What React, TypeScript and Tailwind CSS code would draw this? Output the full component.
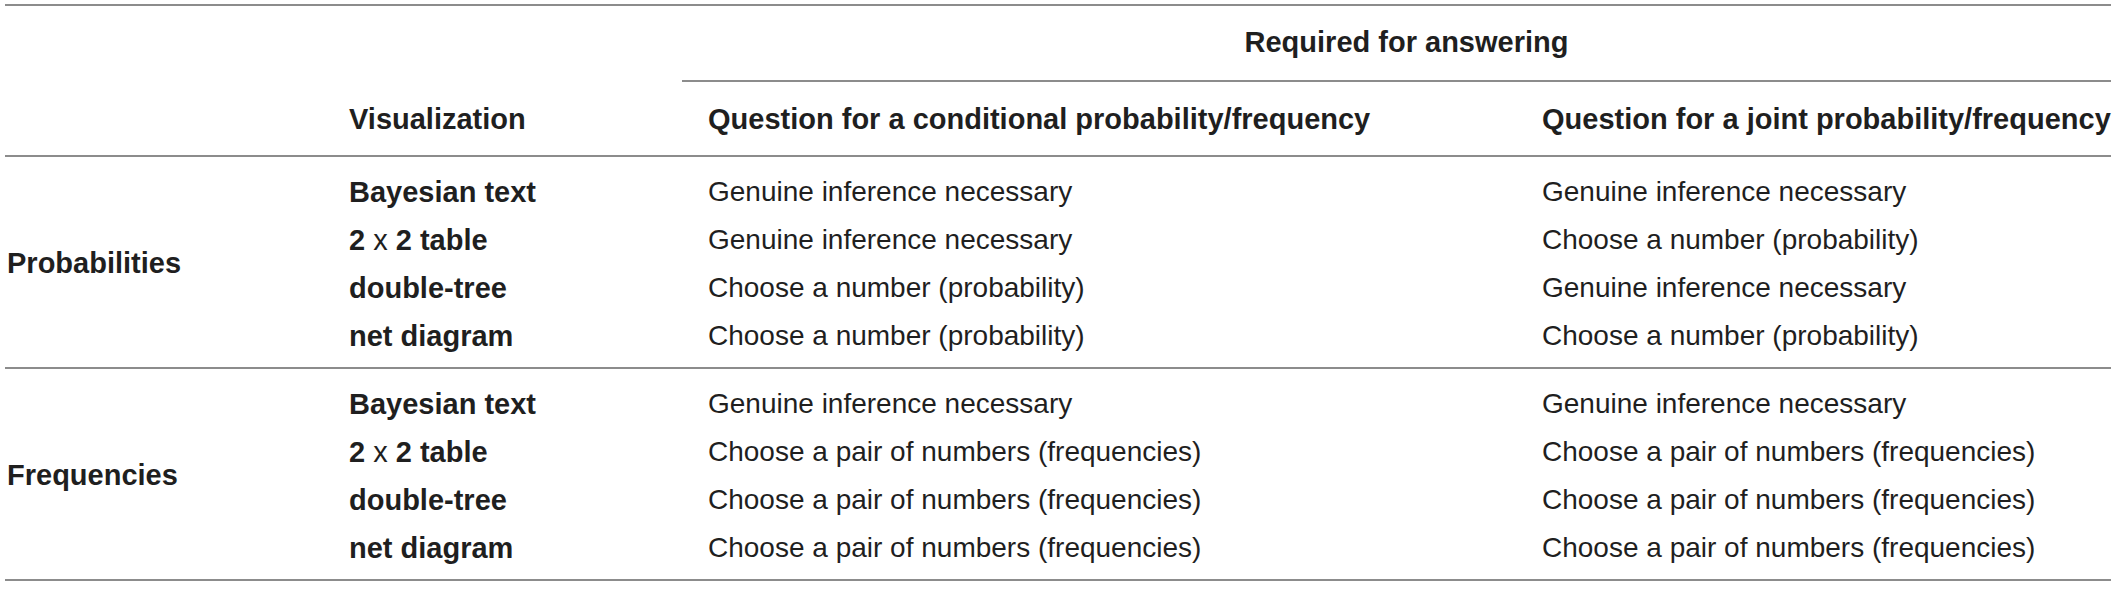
const groups = [
  {
    label: "Probabilities",
    rows: [
      ["Bayesian text", "Genuine inference necessary", "Genuine inference necessary"],
      ["2x2", "Genuine inference necessary", "Choose a number (probability)"],
      ["double-tree", "Choose a number (probability)", "Genuine inference necessary"],
      ["net diagram", "Choose a number (probability)", "Choose a number (probability)"],
    ],
  },
  {
    label: "Frequencies",
    rows: [
      ["Bayesian text", "Genuine inference necessary", "Genuine inference necessary"],
      ["2x2", "Choose a pair of numbers (frequencies)", "Choose a pair of numbers (frequencies)"],
      ["double-tree", "Choose a pair of numbers (frequencies)", "Choose a pair of numbers (frequencies)"],
      ["net diagram", "Choose a pair of numbers (frequencies)", "Choose a pair of numbers (frequencies)"],
    ],
  },
];

function VisLabel({ name }: { name: string }) {
  if (name === "2x2") {
    return (
      <>
        2 <span className="font-normal">x</span> 2 table
      </>
    );
  }
  return <>{name}</>;
}

export default function App() {
  return (
    <div className="bg-white w-[2117px] h-[591px] pt-[4px] pl-[5px] pr-[6px] font-['Liberation_Sans',Arial,sans-serif] text-[28px] text-[#1f1f1f]">
      <div className="border-t-2 border-[#8c8c8c]">
        <div className="grid grid-cols-[318px_359px_834px_1fr]">
          <div />
          <div />
          <div className="col-span-2 h-[76px] flex items-center justify-center pl-[20px] font-bold text-[29px] border-b-2 border-[#8c8c8c]">
            Required for answering
          </div>
        </div>

        <div className="grid grid-cols-[318px_359px_834px_1fr] h-[75px] items-center pt-[2px] font-bold text-[29px] border-b-2 border-[#8c8c8c]">
          <div />
          <div className="pl-[26px]">Visualization</div>
          <div className="pl-[26px]">Question for a conditional probability/frequency</div>
          <div className="pl-[26px] whitespace-nowrap">Question for a joint probability/frequency</div>
        </div>

        {groups.map((g) => (
          <div
            key={g.label}
            className="grid grid-cols-[318px_359px_834px_1fr] grid-rows-[repeat(4,48px)] pt-[11px] pb-[7px] border-b-2 border-[#8c8c8c]"
          >
            <div className="row-span-4 flex items-center pl-[2px] font-bold text-[29px]">{g.label}</div>
            {g.rows.map((r) => (
              <div key={r[0]} className="contents">
                <div className="pl-[26px] leading-[48px] font-bold text-[29px]">
                  <VisLabel name={r[0]} />
                </div>
                <div className="pl-[26px] leading-[48px]">{r[1]}</div>
                <div className="pl-[26px] leading-[48px] whitespace-nowrap">{r[2]}</div>
              </div>
            ))}
          </div>
        ))}
      </div>
    </div>
  );
}
